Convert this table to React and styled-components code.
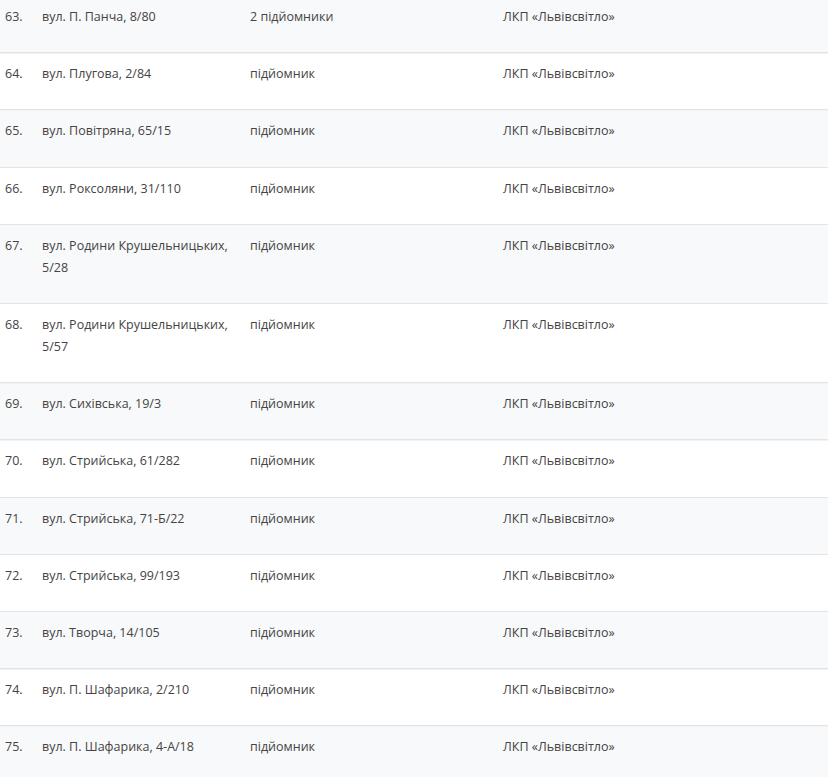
import React from 'react';
import styled, { createGlobalStyle } from 'styled-components';

const GlobalStyle = createGlobalStyle`
  html, body {
    margin: 0;
    padding: 0;
    background: #fff;
    overflow: hidden;
  }
  body {
    font-family: "Open Sans", "Noto Sans", sans-serif;
  }
`;

const rows = [
    ['63.', 'вул. П. Панча, 8/80', '2 підйомники'],
    ['64.', 'вул. Плугова, 2/84', 'підйомник'],
    ['65.', 'вул. Повітряна, 65/15', 'підйомник'],
    ['66.', 'вул. Роксоляни, 31/110', 'підйомник'],
    ['67.', 'вул. Родини Крушельницьких, 5/28', 'підйомник'],
    ['68.', 'вул. Родини Крушельницьких, 5/57', 'підйомник'],
    ['69.', 'вул. Сихівська, 19/3', 'підйомник'],
    ['70.', 'вул. Стрийська, 61/282', 'підйомник'],
    ['71.', 'вул. Стрийська, 71-Б/22', 'підйомник'],
    ['72.', 'вул. Стрийська, 99/193', 'підйомник'],
    ['73.', 'вул. Творча, 14/105', 'підйомник'],
    ['74.', 'вул. П. Шафарика, 2/210', 'підйомник'],
    ['75.', 'вул. П. Шафарика, 4-А/18', 'підйомник'],
];

function App() {
    return (
        <>
            <GlobalStyle />
            <TableWrap>
                <Table>
                    <colgroup>
                        <col style={{ width: 37 }} />
                        <col style={{ width: 208 }} />
                        <col style={{ width: 253 }} />
                        <col />
                    </colgroup>
                    <tbody>
                        {rows.map((row, i) => (
                            <Row key={row[0]} striped={i % 2 === 0}>
                                <Cell>{row[0]}</Cell>
                                <Cell>{row[1]}</Cell>
                                <Cell>{row[2]}</Cell>
                                <Cell>ЛКП «Львівсвітло»</Cell>
                            </Row>
                        ))}
                    </tbody>
                </Table>
            </TableWrap>
        </>
    );
}

export default App;

const TableWrap = styled.div`
  width: 828px;
  height: 777px;
  overflow: hidden;
`;

const Table = styled.table`
  width: 100%;
  margin-top: -5px;
  border-collapse: collapse;
  table-layout: fixed;
`;

const Row = styled.tr`
  background: ${p => (p.striped ? '#f8f9fa' : '#fff')};
  border-top: 1px solid #e2e4e6;
  box-shadow: inset 0 1px 0 #f1f2f3;
`;

const Cell = styled.td`
  padding: 10px 5px 24.2px 5px;
  vertical-align: top;
  font-size: 12.5px;
  line-height: 22px;
  color: #444;
`;
